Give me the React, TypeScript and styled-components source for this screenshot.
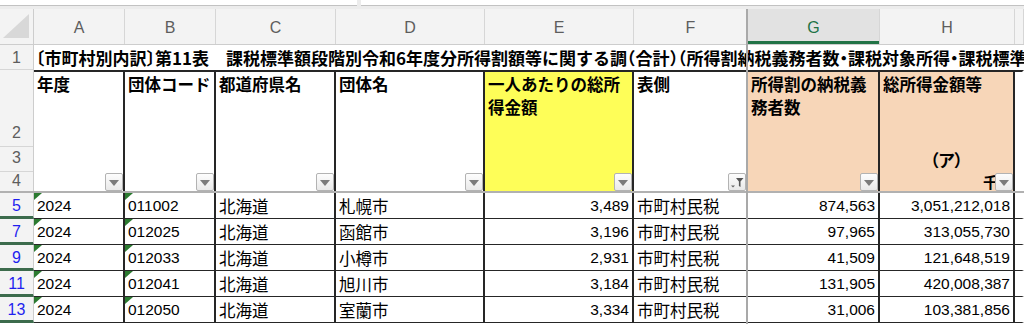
import styled, { createGlobalStyle } from "styled-components"

const COLS = "34px 91px 91px 120px 149px 149px 114px 132px 135px 1fr"
const LINE = "#262626"
const PANE = "#a9a9a9"

interface Head {
    label : string,
    bg? : string,
    edge? : string,
    filtered? : boolean,
    sub? : string,
    unit? : string,
    blank? : boolean
}

const heads : Head[] = [
    { label : "年度" },
    { label : "団体コード" },
    { label : "都道府県名" },
    { label : "団体名" },
    { label : "一人あたりの総所得金額", bg : "#fefe58" },
    { label : "表側", filtered : true, edge : PANE },
    { label : "所得割の納税義務者数", bg : "#f7d6b8" },
    { label : "総所得金額等", bg : "#f7d6b8", sub : "（ア）", unit : "千円" },
    { label : "", blank : true },
]

const letters = ["A", "B", "C", "D", "E", "F", "G", "H", ""]

const rows = [
    { n : 5, code : "011002", city : "札幌市", avg : "3,489", payers : "874,563", income : "3,051,212,018" },
    { n : 7, code : "012025", city : "函館市", avg : "3,196", payers : "97,965", income : "313,055,730" },
    { n : 9, code : "012033", city : "小樽市", avg : "2,931", payers : "41,509", income : "121,648,519" },
    { n : 11, code : "012041", city : "旭川市", avg : "3,184", payers : "131,905", income : "420,008,387" },
    { n : 13, code : "012050", city : "室蘭市", avg : "3,334", payers : "31,006", income : "103,381,856" },
]

const TITLE = "〔市町村別内訳〕第11表　課税標準額段階別令和6年度分所得割額等に関する調（合計）（所得割納税義務者数・課税対象所得・課税標準額・所得割額）"

const FilterIcon = () => (
    <svg width="14" height="12" viewBox="0 0 14 12">
        <path d="M1 9.5h4l-2 2z" fill="#666" />
        <path d="M6 2h7.5l-3 3.6v5.4l-1.6-1v-4.4z" fill="#555" />
    </svg>
)

export default function App() {
    return (
        <>
            <GlobalStyle />
            <Sheet>
                <FormulaStrip>
                    <NameBox />
                    <FormulaBox />
                </FormulaStrip>

                <ColumnHeadRow>
                    <Corner><CornerMark /></Corner>
                    {letters.map((l, i) => (
                        <ColLetter key={i} $selected={l === "G"}>{l}</ColLetter>
                    ))}
                </ColumnHeadRow>

                <TitleRow>
                    <RowHead>1</RowHead>
                    <TitleText>{TITLE}</TitleText>
                </TitleRow>

                <HeaderBlock>
                    <RowHeadStack>
                        <StackNum $h={77}>2</StackNum>
                        <StackNum $h={25}>3</StackNum>
                        <StackNum $h={19} $last>4</StackNum>
                    </RowHeadStack>
                    {heads.map((h, i) => (
                        <HeadCell key={i} $bg={h.bg} $edge={h.blank ? "transparent" : h.edge ?? LINE}>
                            <HeadLabel>{h.label}</HeadLabel>
                            <HeadSub>{h.sub}</HeadSub>
                            <HeadFoot>
                                {h.unit && <UnitText>{h.unit}</UnitText>}
                                {!h.blank && (
                                    <FilterBtn>
                                        {h.filtered ? <FilterIcon /> : <Caret />}
                                    </FilterBtn>
                                )}
                            </HeadFoot>
                        </HeadCell>
                    ))}
                </HeaderBlock>

                {rows.map((r) => (
                    <DataRow key={r.n}>
                        <DataRowHead>{r.n}</DataRowHead>
                        <DataCell $mark>2024</DataCell>
                        <DataCell $mark>{r.code}</DataCell>
                        <DataCell $text>北海道</DataCell>
                        <DataCell $text>{r.city}</DataCell>
                        <DataCell $num>{r.avg}</DataCell>
                        <DataCell $text $edge={PANE}>市町村民税</DataCell>
                        <DataCell $num>{r.payers}</DataCell>
                        <DataCell $num>{r.income}</DataCell>
                        <DataCell $edge="transparent" />
                    </DataRow>
                ))}

                <FreezeLine />
            </Sheet>
        </>
    )
}

const GlobalStyle = createGlobalStyle`
    * { box-sizing : border-box; }
    html, body { margin : 0; padding : 0; background : #fff; }
    body {
        font-family : "Liberation Sans", "Noto Sans CJK JP", sans-serif;
        color : #000;
    }
`

const Sheet = styled.div`
    position : relative;
    width : 1024px;
    height : 324px;
    overflow : hidden;
    display : flex;
    flex-direction : column;
    background : #fff;
`

const FormulaStrip = styled.div`
    height : 9px;
    display : flex;
    gap : 4px;
    padding-bottom : 3px;
    background : #ececec;
`

const NameBox = styled.div`
    width : 357px;
    background : #fff;
    border-bottom : 1px solid #c2c2c2;
`

const FormulaBox = styled(NameBox)`
    width : auto;
    flex : 1;
`

const ColumnHeadRow = styled.div`
    display : grid;
    grid-template-columns : ${COLS};
    height : 36px;
    background : #f3f3f3;
    border-bottom : 1px solid #cdcdcd;
`

const Corner = styled.div`
    display : flex;
    align-items : flex-end;
    justify-content : flex-end;
    padding : 0 4px 6px 0;
    border-right : 1px solid #cdcdcd;
`

const CornerMark = styled.div`
    width : 26px;
    height : 24px;
    background : #d8d8d8;
    clip-path : polygon(100% 0, 100% 100%, 0 100%);
`

const ColLetter = styled.div<{ $selected? : boolean }>`
    display : flex;
    align-items : center;
    justify-content : center;
    padding-top : 2px;
    font-size : 16px;
    color : ${({ $selected }) => $selected ? "#217346" : "#5d5d5d"};
    background : ${({ $selected }) => $selected ? "#e2e2e2" : "transparent"};
    border-right : 1px solid #d6d6d6;
    box-shadow : ${({ $selected }) => $selected ? "inset 0 -3px 0 #217346" : "none"};
`

const TitleRow = styled.div`
    display : grid;
    grid-template-columns : ${COLS};
    height : 25px;
`

const RowHead = styled.div`
    display : flex;
    align-items : center;
    justify-content : center;
    padding-top : 2px;
    font-size : 16px;
    color : #5d5d5d;
    background : #f3f3f3;
    border-right : 1px solid #cdcdcd;
    border-bottom : 1px solid #d6d6d6;
`

const TitleText = styled.div`
    grid-column : 2 / -1;
    padding-left : 2px;
    font-family : "Noto Sans CJK JP", sans-serif;
    font-weight : 700;
    font-size : 17px;
    line-height : 25px;
    font-feature-settings : "halt";
    white-space : nowrap;
    overflow : hidden;
`

const HeaderBlock = styled.div`
    display : grid;
    grid-template-columns : ${COLS};
    height : 123px;
    border-bottom : 2px solid #b1b1b1;
`

const RowHeadStack = styled.div`
    display : flex;
    flex-direction : column;
    background : #f3f3f3;
    border-right : 1px solid #cdcdcd;
`

const StackNum = styled.div<{ $h : number, $last? : boolean }>`
    height : ${({ $h }) => $h}px;
    display : flex;
    align-items : flex-end;
    justify-content : center;
    padding-bottom : ${({ $last }) => $last ? 1 : 4}px;
    font-size : 16px;
    color : #5d5d5d;
    border-bottom : ${({ $last }) => $last ? "none" : "1px solid #d6d6d6"};
`

const HeadCell = styled.div<{ $bg? : string, $edge : string }>`
    display : grid;
    grid-template-rows : 75px 25px 1fr;
    background : ${({ $bg }) => $bg ?? "#fff"};
    border-top : 2px solid ${LINE};
    border-right : 2px solid ${({ $edge }) => $edge};
    min-width : 0;
`

const HeadLabel = styled.div`
    padding : 1px 2px 0 3px;
    font-family : "Noto Sans CJK JP", sans-serif;
    font-weight : 700;
    font-size : 16.5px;
    line-height : 23px;
    overflow : hidden;
`

const HeadSub = styled.div`
    display : flex;
    align-items : center;
    justify-content : center;
    font-family : "Noto Sans CJK JP", sans-serif;
    font-weight : 700;
    font-size : 17px;
    font-feature-settings : "palt";
`

const HeadFoot = styled.div`
    position : relative;
    display : flex;
    align-items : center;
    justify-content : flex-end;
    overflow : hidden;
`

const UnitText = styled.span`
    font-family : "Noto Sans CJK JP", sans-serif;
    font-weight : 700;
    font-size : 15px;
    line-height : 19px;
    white-space : nowrap;
`

const FilterBtn = styled.div`
    position : absolute;
    right : 0;
    bottom : 0;
    width : 18px;
    height : 18px;
    display : flex;
    align-items : center;
    justify-content : center;
    border : 1px solid #b3b3b3;
    border-radius : 2px;
    background : linear-gradient(#fdfdfd, #e9e9e9);
`

const Caret = styled.div`
    width : 0;
    height : 0;
    margin-top : 1px;
    border-left : 5px solid transparent;
    border-right : 5px solid transparent;
    border-top : 6px solid #7b7b7b;
`

const DataRow = styled.div`
    display : grid;
    grid-template-columns : ${COLS};
    height : 26px;
    flex : none;
`

const DataRowHead = styled.div`
    display : flex;
    align-items : center;
    justify-content : center;
    padding-top : 3px;
    font-size : 16px;
    color : #1f1fef;
    background : #f3f3f3;
    border-right : 1px solid #cdcdcd;
    border-bottom : 3px solid #3c6b4c;
`

const DataCell = styled.div<{ $num? : boolean, $text? : boolean, $mark? : boolean, $edge? : string }>`
    position : relative;
    display : flex;
    align-items : center;
    justify-content : ${({ $num }) => $num ? "flex-end" : "flex-start"};
    padding : 1px 3px 0 3px;
    min-width : 0;
    white-space : nowrap;
    overflow : hidden;
    font-family : ${({ $text }) => $text ? `"Noto Sans CJK JP", sans-serif` : `"Liberation Sans", sans-serif`};
    font-size : ${({ $text }) => $text ? "16.5px" : "15.5px"};
    border-right : 2px solid ${({ $edge }) => $edge ?? LINE};
    border-bottom : 1px solid ${LINE};

    ${({ $mark }) => $mark && `
        &::before {
            content : "";
            position : absolute;
            top : 0;
            left : 0;
            width : 8px;
            height : 7px;
            background : #2b7a30;
            clip-path : polygon(0 0, 100% 0, 0 100%);
        }
    `}
`

const FreezeLine = styled.div`
    position : absolute;
    left : 746px;
    top : 9px;
    bottom : 0;
    width : 2px;
    background : ${PANE};
`
